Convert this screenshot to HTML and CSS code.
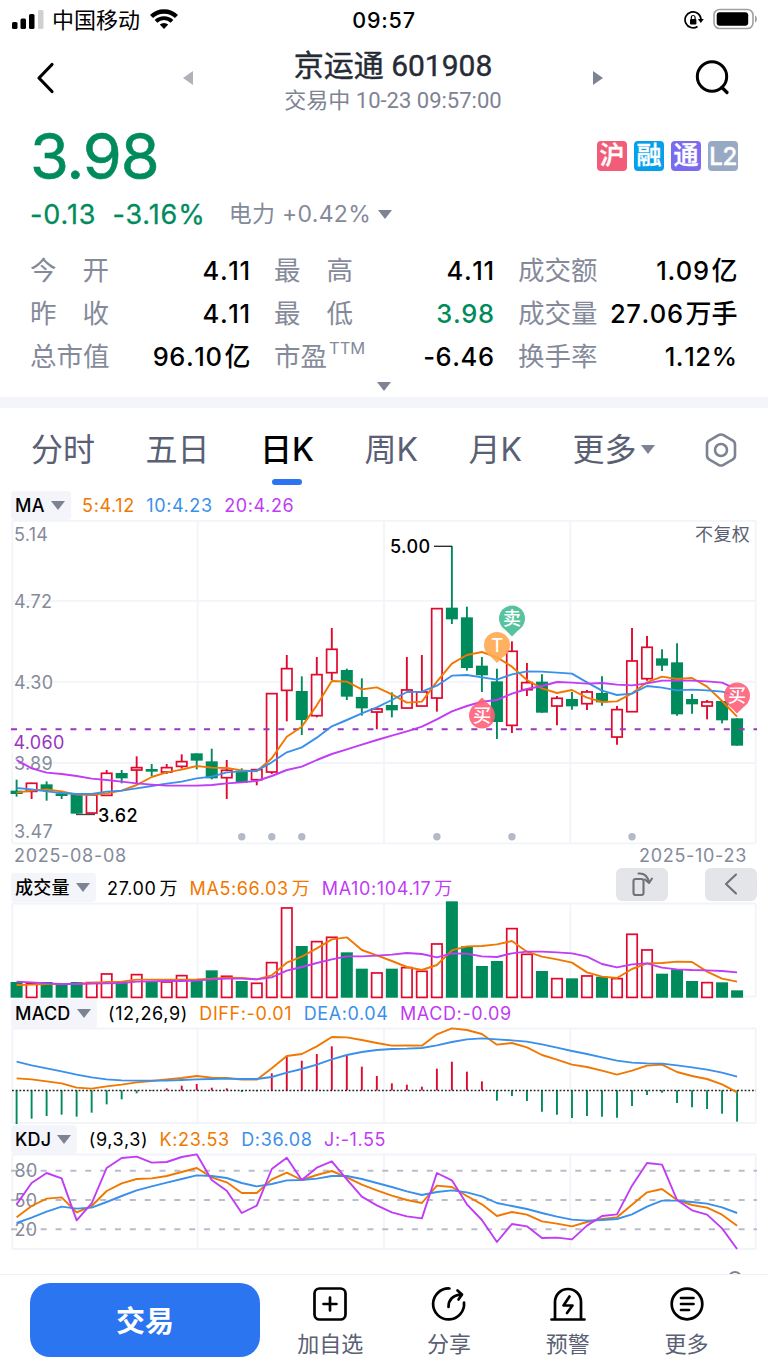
FILE: index.html
```html
<!DOCTYPE html>
<html lang="zh-CN">
<head>
  <meta charset="utf-8">
  <title>京运通 601908</title>
  <link rel="stylesheet" href="styles.css">
</head>
<body>
  <div class="status-bar">
    <svg class="signal" width="32" height="20" viewBox="0 0 32 20">
      <rect x="0" y="12" width="5.5" height="7" rx="1.5"/>
      <rect x="8.5" y="8.5" width="5.5" height="10.5" rx="1.5"/>
      <rect x="17" y="4" width="5.5" height="15" rx="1.5"/>
      <rect x="26" y="0" width="5.5" height="19" rx="1.5" fill="#d0d0d0"/>
    </svg>
    <span class="carrier">中国移动</span>
    <svg class="wifi" width="28" height="20" viewBox="0 0 28 20">
      <path d="M1.5 7.5a18 18 0 0 1 25 0" fill="none" stroke="#000" stroke-width="4.400"/>
      <path d="M6 12.3a11.5 11.5 0 0 1 16 0" fill="none" stroke="#000" stroke-width="3.8"/>
      <path d="M14 20l-4.2-4.4a6.2 6.2 0 0 1 8.4 0z"/>
    </svg>
    <span class="clock">09:57</span>
    <svg class="lock" width="20" height="18" viewBox="0 0 20 18">
      <path d="M13.5 15.5A8 8 0 1 1 17 8" fill="none" stroke="#000" stroke-width="1.7"/>
      <path d="M13.8 8h6l-3 4z"/>
      <rect x="6" y="8" width="6.4" height="5.4" rx="1"/>
      <path d="M7.3 8V6.4a1.9 1.9 0 0 1 3.8 0V8" fill="none" stroke="#000" stroke-width="1.2"/>
    </svg>
    <svg class="battery" width="46" height="22" viewBox="0 0 46 22">
      <rect x="1" y="1.500" width="39" height="19" rx="5.500" fill="none" stroke="#a0a0a0" stroke-width="1.600"/>
      <rect x="3.700" y="4.300" width="31.500" height="13.500" rx="3"/>
      <path d="M42 7.500c2.500 1 2.500 6 0 7z" fill="#a0a0a0"/>
    </svg>
  </div>

  <header class="header">
    <svg class="back" width="20" height="32" viewBox="0 0 20 32">
      <path d="M16 2.500L3 16L16 29.500" fill="none" stroke="#000" stroke-width="3.200" stroke-linecap="round" stroke-linejoin="round"/>
    </svg>
    <svg class="prev" width="10" height="14" viewBox="0 0 10 14"><path d="M10 0v14L0 7z" fill="#b0b2b8"/></svg>
    <div class="title">
      <h1>京运通 601908</h1>
      <p>交易中 10-23 09:57:00</p>
    </div>
    <svg class="next" width="10" height="14" viewBox="0 0 10 14"><path d="M0 0v14l10-7z" fill="#7e8394"/></svg>
    <svg class="search" width="36" height="36" viewBox="0 0 36 36">
      <circle cx="17" cy="16.500" r="14.700" fill="none" stroke="#000" stroke-width="3"/>
      <path d="M27 27.500l5 5" stroke="#000" stroke-width="3.200" stroke-linecap="round"/>
    </svg>
  </header>

  <section class="quote">
    <div class="price-row">
      <span class="price">3.98</span>
      <div class="tags">
        <span class="tag tag-hu">沪</span>
        <span class="tag tag-rong">融</span>
        <span class="tag tag-tong">通</span>
        <span class="tag tag-l2">L2</span>
      </div>
    </div>
    <div class="change-row">
      <span class="change">-0.13</span>
      <span class="change percent">-3.16%</span>
      <span class="sector">电力 <span class="sector-num">+0.42%</span></span>
      <i class="caret"></i>
    </div>
    <div class="stats">
      <div class="stat"><span class="wide"><b>今</b><b>开</b></span><em>4.11</em></div>
      <div class="stat"><span class="wide"><b>最</b><b>高</b></span><em>4.11</em></div>
      <div class="stat"><span>成交额</span><em>1.09<small>亿</small></em></div>
      <div class="stat"><span class="wide"><b>昨</b><b>收</b></span><em>4.11</em></div>
      <div class="stat"><span class="wide"><b>最</b><b>低</b></span><em class="down">3.98</em></div>
      <div class="stat"><span>成交量</span><em>27.06<small>万手</small></em></div>
      <div class="stat"><span>总市值</span><em>96.10<small>亿</small></em></div>
      <div class="stat"><span>市盈<sup>TTM</sup></span><em>-6.46</em></div>
      <div class="stat"><span>换手率</span><em>1.12%</em></div>
    </div>
    <div class="expand"><i class="caret"></i></div>
  </section>

  <nav class="tabs">
    <a>分时</a>
    <a>五日</a>
    <a class="active">日K</a>
    <a>周K</a>
    <a>月K</a>
    <a class="more">更多<i class="caret"></i></a>
    <svg width="32" height="34" viewBox="0 0 32 34">
      <path d="M13.500 2.200q2.500-1.400 5 0l9 5.200q2.500 1.400 2.500 4.300v10.600q0 2.900-2.500 4.300l-9 5.200q-2.500 1.400-5 0l-9-5.200Q2 25.200 2 22.300V11.700q0-2.900 2.500-4.300z" fill="none" stroke="#7e8394" stroke-width="2.600"/>
      <circle cx="16" cy="17" r="6" fill="none" stroke="#7e8394" stroke-width="2.600"/>
    </svg>
  </nav>

  <main class="charts">
    <div class="legend legend-ma">
      <span class="picker">MA<i class="caret"></i></span>
      <span class="c-orange">5:4.12</span>
      <span class="c-blue">10:4.23</span>
      <span class="c-purple">20:4.26</span>
    </div>
    <svg id="kline" class="plot" width="768" height="324"></svg>
    <div class="dates"><span>2025-08-08</span><span>2025-10-23</span></div>

    <div class="legend legend-vol">
      <span class="picker">成交量<i class="caret"></i></span>
      <span>27.00<small>万</small></span>
      <span class="c-orange">MA5:66.03<small>万</small></span>
      <span class="c-purple">MA10:104.17<small>万</small></span>
      <div class="tools">
        <button>
          <svg width="24" height="26" viewBox="0 0 24 26">
            <rect x="3.500" y="8" width="10" height="16" rx="2"/>
            <path d="M8.500 2.500c5.500-.5 9 2.500 10.500 8.500M15 8.500l4 3.500l3-4.500"/>
          </svg>
        </button>
        <button>
          <svg width="14" height="22" viewBox="0 0 14 22"><path d="M12 1.500L2 11l10 9.500"/></svg>
        </button>
      </div>
    </div>
    <svg id="volume" class="plot" width="768" height="95"></svg>

    <div class="legend legend-macd">
      <span class="picker">MACD<i class="caret"></i></span>
      <span>(12,26,9)</span>
      <span class="c-orange">DIFF:-0.01</span>
      <span class="c-blue">DEA:0.04</span>
      <span class="c-purple">MACD:-0.09</span>
    </div>
    <svg id="macd" class="plot" width="768" height="96"></svg>

    <div class="legend legend-kdj">
      <span class="picker">KDJ<i class="caret"></i></span>
      <span>(9,3,3)</span>
      <span class="c-orange">K:23.53</span>
      <span class="c-blue">D:36.08</span>
      <span class="c-purple">J:-1.55</span>
    </div>
    <svg id="kdj" class="plot" width="768" height="96"></svg>
    <div class="peek"><i></i></div>
  </main>

  <footer class="bottom-bar">
    <button class="trade">交易</button>
    <a>
      <svg width="36" height="36" viewBox="0 0 36 36"><rect x="2.500" y="2.500" width="31" height="31" rx="5"/><path d="M18 11.500v13M11.500 18h13"/></svg>
      加自选
    </a>
    <a>
      <svg width="36" height="36" viewBox="0 0 36 36"><path d="M18.500 2.500A15.500 15.500 0 1 0 33 16.500"/><path d="M17.500 21c0-7 4-11.500 12-12.500M26.500 4.500l4.500 4l-3.500 5"/></svg>
      分享
    </a>
    <a>
      <svg width="36" height="36" viewBox="0 0 36 36"><path d="M5 33V16a13 13 0 0 1 26 0v17M1.500 33.500h33"/><path d="M19.500 10.500l-6 9h9l-5.500 7.500"/></svg>
      预警
    </a>
    <a>
      <svg width="36" height="36" viewBox="0 0 36 36"><circle cx="18" cy="18" r="15.300"/><path d="M12 12h12.500M12 18h12.500M12 24h8"/></svg>
      更多
    </a>
  </footer>
  <script src="chart.js"></script>
</body>
</html>
```
FILE: styles.css
```css
* {
  box-sizing: border-box;
}

body {
  margin: 0;
  width: 768px;
  height: 1366px;
  overflow: hidden;
  background: #fff;
  color: #000;
  font-family: Inter, "Noto Sans CJK SC", sans-serif;
}

h1, p {
  margin: 0;
}

i, em, b {
  font-style: normal;
  font-weight: inherit;
}

button {
  border: 0;
  padding: 0;
  font-family: inherit;
}

.caret {
  display: inline-block;
  border: 7px solid transparent;
  border-top: 9px solid #7e8394;
  border-bottom: 0;
}

.c-orange { color: #f07800; }
.c-blue { color: #3a90ea; }
.c-purple { color: #c03cf5; }
.down { color: #008b5c; }

/* status bar */
.status-bar {
  display: flex;
  align-items: center;
  height: 40px;
  padding: 0 9px 0 12px;
  position: relative;
}

.carrier {
  margin: 0 10px 0 8px;
  font-size: 22px;
  line-height: 40px;
}

.signal {
  margin-bottom: 1px;
}

.wifi {
  margin-bottom: 3px;
}

.clock {
  position: absolute;
  left: 0;
  right: 0;
  text-align: center;
  font-size: 21.5px;
  font-weight: 500;
  letter-spacing: 0.8px;
}

.lock {
  margin-left: auto;
}

.battery {
  margin-left: 9px;
  margin-bottom: 2px;
}

/* header */
.header {
  display: flex;
  align-items: center;
  height: 76px;
  padding: 0 37px 0 36px;
}

.prev {
  margin-left: 127px;
}

.title {
  flex: 1;
  text-align: center;
  padding-top: 8px;
  font-family: Roboto, "Noto Sans CJK SC", sans-serif;
}

.title h1 {
  font-size: 30px;
  font-weight: 400;
  line-height: 38px;
  color: #262b35;
  -webkit-text-stroke: 0.4px #262b35;
}

.title p {
  font-size: 22px;
  line-height: 32px;
  color: #7e8394;
}

.search {
  margin-left: 92px;
}

/* quote */
.quote {
  height: 292px;
  border-bottom: 11px solid #f4f5fa;
  padding: 0 31px 0 30px;
}

.price-row {
  display: flex;
  justify-content: space-between;
  height: 76px;
  padding-top: 2px;
  margin-right: -1px;
}

.price {
  font-size: 63px;
  line-height: 76px;
  letter-spacing: -1.2px;
  color: #008b5c;
  -webkit-text-stroke: 0.6px #008b5c;
}

.tags {
  display: flex;
  gap: 7px;
  padding-top: 23px;
}

.tag {
  width: 30px;
  height: 30px;
  border-radius: 4px;
  color: #fff;
  font-size: 25px;
  font-weight: 500;
  line-height: 29px;
  text-align: center;
  -webkit-text-stroke: 0.4px #fff;
}

.tag-hu { background: #f25c78; }
.tag-rong { background: #06a0ea; }
.tag-tong { background: #7a6ced; }
.tag-l2 { background: #98a9c4; font-size: 24px; line-height: 31px; letter-spacing: -0.5px; }

.change-row {
  display: flex;
  align-items: center;
  height: 44px;
  font-size: 27px;
  letter-spacing: 0.9px;
}

.change {
  color: #008b5c;
  -webkit-text-stroke: 0.3px #008b5c;
}

.percent {
  margin-left: 16px;
}

.sector {
  margin-left: 23px;
  margin-top: -1px;
  font-size: 23px;
  letter-spacing: 0.3px;
  line-height: 40px;
  color: #858a9a;
}

.change-row .caret {
  margin-left: 7px;
}

.stats {
  display: grid;
  grid-template-columns: 220px 220px 219px;
  grid-auto-rows: 43px;
  column-gap: 24px;
  margin-top: 13px;
}

.stat {
  display: flex;
  justify-content: space-between;
  white-space: nowrap;
  line-height: 43px;
  font-size: 26.5px;
}

.stat > span {
  color: #858a9a;
}

.stat .wide {
  display: flex;
  justify-content: space-between;
  width: 79px;
}

.stat sup {
  margin-left: 2px;
  font-size: 16.5px;
  line-height: 0;
  vertical-align: 12px;
}

.stat em {
  font-size: 25.5px;
  font-weight: 500;
  font-kerning: none;
  letter-spacing: 0.6px;
  margin-right: -0.6px;
}

.stat em small {
  margin-left: 2px;
  font-size: 26px;
  letter-spacing: 0;
}

.expand {
  height: 20px;
  padding-top: 3px;
  line-height: 20px;
  text-align: center;
  font-size: 0;
}

/* period tabs */
.tabs {
  display: flex;
  justify-content: space-between;
  align-items: center;
  height: 82px;
  padding: 1px 31px 0 31px;
}

.tabs a {
  position: relative;
  font-size: 32px;
  line-height: 50px;
  color: #5a6074;
}

.tabs .active {
  color: #000;
  font-weight: 500;
}

.tabs .active::after {
  content: "";
  position: absolute;
  left: 12px;
  bottom: -10px;
  width: 30px;
  height: 6px;
  border-radius: 3px;
  background: #2b76f0;
}

.tabs .caret {
  margin-left: 4px;
  vertical-align: 7px;
}

/* charts */
.legend {
  display: flex;
  align-items: center;
  height: 30px;
  padding-left: 11px;
  font-size: 18px;
  letter-spacing: 0.6px;
  white-space: nowrap;
}

.legend > span {
  margin-right: 11.5px;
}

.legend small {
  font-size: 18px;
  margin-left: 3px;
}

.legend .picker {
  height: 29px;
  padding: 0 6px 0 4px;
  line-height: 30px;
  border-radius: 4px;
  background: #f4f5fa;
  font-weight: 500;
  letter-spacing: 0.2px;
}

.picker .caret {
  margin-left: 6px;
  vertical-align: 2px;
}

.plot {
  display: block;
  overflow: visible;
}

.dates {
  display: flex;
  justify-content: space-between;
  height: 24px;
  padding: 0 21px 0 14px;
  font-size: 18px;
  line-height: 24px;
  letter-spacing: 0.7px;
  color: #858a9a;
}

.legend-vol {
  height: 35px;
  padding-top: 3px;
}

.tools {
  display: flex;
  gap: 37px;
  margin: -6px 11px 0 auto;
}

.tools button {
  width: 52px;
  height: 33px;
  border-radius: 6px;
  background: #e4e5e9;
}

.tools svg {
  display: block;
  margin: 0 auto;
  fill: none;
  stroke: #70727a;
  stroke-width: 2.1;
  stroke-linecap: round;
  stroke-linejoin: round;
}

.label {
  font-size: 18px;
  letter-spacing: 0.3px;
  fill: #858a9a;
}

.label-dark {
  fill: #5a6074;
}

.label-cost {
  fill: #9a35bd;
}

.mark {
  font-size: 18px;
  font-weight: 500;
  letter-spacing: 0.4px;
  fill: #000;
}

.pin {
  font-size: 18px;
  font-weight: 500;
  fill: #fff;
}

.peek {
  height: 24px;
  overflow: hidden;
  padding: 21px 0 0 728px;
}

.peek i {
  display: block;
  width: 14px;
  height: 14px;
  border: 2px solid #7e8394;
  border-radius: 50%;
}

/* bottom bar */
.bottom-bar {
  display: flex;
  height: 92px;
  padding: 8px 22px 0 30px;
  border-top: 1px solid #f0f1f5;
  background: #fff;
}

.trade {
  width: 230px;
  height: 74px;
  margin-right: 11px;
  padding-bottom: 2px;
  border-radius: 20px;
  background: #2b76f0;
  color: #fff;
  font-size: 29px;
  font-weight: 600;
}

.bottom-bar a {
  flex: 1;
  text-align: center;
  font-size: 22px;
  line-height: 34px;
  color: #5a6074;
}

.bottom-bar svg {
  display: block;
  margin: 3px auto 5px;
  fill: none;
  stroke: #000;
  stroke-width: 2.7;
  stroke-linecap: round;
  stroke-linejoin: round;
}
```
FILE: chart.js
```js
const RED = '#e3082d';
const GREEN = '#008b5c';
const ORANGE = '#f07800';
const BLUE = '#3a90ea';
const PURPLE = '#c03cf5';

// all series are stored in thirds of a pixel
// candle: [direction, high, body top, body bottom, low]
const candles = [
  ['d', 779, 812, 822, 830], ['u', 788, 789, 815, 837], ['d', 784, 793, 812, 842], ['d', 815, 820, 828, 837],
  ['d', 820, 820, 881, 881], ['u', 824, 824, 880, 880], ['u', 750, 759, 827, 827], ['d', 750, 759, 775, 790],
  ['u', 709, 742, 751, 792], ['d', 732, 747, 755, 768], ['u', 732, 742, 757, 762], ['u', 703, 724, 740, 746],
  ['d', 700, 700, 722, 748], ['d', 686, 724, 775, 778], ['u', 720, 750, 774, 837], ['d', 745, 752, 788, 788],
  ['u', 748, 748, 780, 796], ['u', 520, 520, 757, 762], ['u', 405, 445, 512, 604], ['d', 469, 513, 600, 645],
  ['u', 411, 463, 588, 592], ['u', 324, 387, 459, 480], ['d', 446, 450, 530, 540], ['d', 475, 531, 565, 587],
  ['u', 562, 566, 577, 628], ['d', 517, 555, 571, 592], ['u', 411, 509, 565, 565], ['u', 405, 515, 559, 559],
  ['u', 265, 265, 535, 575], ['d', 78, 263, 298, 312], ['d', 260, 292, 444, 452], ['d', 411, 437, 466, 516],
  ['d', 446, 484, 606, 657], ['u', 364, 393, 617, 639], ['u', 429, 487, 510, 528], ['d', 463, 485, 578, 578],
  ['u', 528, 534, 559, 616], ['d', 516, 537, 559, 569], ['u', 510, 515, 552, 570], ['d', 469, 519, 547, 557],
  ['u', 558, 568, 652, 674], ['u', 324, 422, 576, 576], ['u', 348, 381, 477, 482], ['d', 388, 415, 437, 453],
  ['d', 370, 427, 583, 587], ['d', 522, 537, 553, 581], ['u', 540, 545, 559, 598], ['d', 543, 543, 601, 610],
  ['d', 595, 595, 677, 677]
];

const ma5 = [818, 812, 808, 814, 824, 825, 820, 812, 795, 771, 757, 749, 738, 743, 744, 751, 754, 715, 650, 620, 556, 483, 485, 508, 502, 523, 548, 545, 485, 431, 405, 396, 412, 440, 480, 505, 519, 510, 533, 546, 544, 520, 487, 470, 477, 474, 500, 543, 590];
const ma10 = [804, 808, 814, 819, 822, 822, 815, 812, 805, 798, 791, 785, 775, 770, 757, 754, 752, 727, 697, 682, 653, 619, 600, 580, 562, 540, 516, 515, 497, 467, 465, 472, 479, 463, 454, 455, 458, 461, 487, 512, 525, 521, 498, 503, 511, 509, 511, 515, 527];
const ma20 = [720, 745, 758, 762, 768, 776, 780, 785, 790, 794, 797, 797, 797, 795, 790, 787, 783, 768, 750, 740, 720, 702, 688, 674, 660, 647, 634, 620, 598, 574, 558, 545, 540, 521, 507, 498, 486, 488, 491, 489, 494, 496, 490, 482, 482, 482, 484, 488, 508];

const vol = [351, 355, 351, 356, 351, 352, 326, 351, 328, 351, 350, 331, 347, 316, 333, 348, 354, 292, 128, 243, 229, 216, 262, 311, 323, 311, 307, 318, 236, 109, 244, 303, 288, 190, 267, 318, 340, 340, 332, 335, 340, 207, 254, 326, 313, 348, 352, 352, 376];
const vol5 = [360, 359, 357, 357, 356, 354, 351, 350, 344, 344, 344, 344, 343, 341, 338, 339, 343, 331, 293, 275, 250, 223, 217, 255, 271, 288, 306, 315, 300, 256, 244, 243, 238, 228, 260, 275, 283, 293, 322, 335, 339, 312, 295, 294, 290, 291, 320, 341, 350];
const vol10 = [350, 352, 355, 357, 357, 356, 355, 354, 350, 349, 348, 348, 347, 343, 341, 341, 343, 337, 317, 306, 294, 283, 274, 274, 272, 269, 264, 267, 277, 265, 266, 274, 276, 265, 260, 260, 262, 265, 275, 297, 307, 298, 295, 308, 313, 315, 316, 318, 322];

const hist = [312, 296, 288, 284, 290, 278, 253, 238, 220, 213, 205, 197, 192, 203, 205, 216, 214, 160, 107, 122, 102, 79, 105, 140, 168, 190, 194, 200, 146, 125, 155, 184, 242, 228, 243, 275, 284, 294, 288, 290, 293, 258, 225, 218, 249, 262, 267, 281, 305];
const diff = [175, 178, 184, 190, 203, 206, 199, 194, 187, 183, 178, 174, 168, 173, 174, 179, 179, 145, 108, 102, 79, 51, 52, 60, 69, 77, 76, 77, 43, 25, 30, 42, 74, 69, 82, 105, 119, 134, 141, 152, 164, 152, 137, 134, 156, 168, 177, 193, 217];
const dea = [125, 136, 145, 154, 164, 172, 178, 181, 182, 182, 182, 180, 178, 177, 176, 177, 177, 171, 158, 147, 134, 118, 105, 96, 90, 87, 86, 84, 76, 66, 58, 55, 58, 61, 65, 73, 83, 93, 102, 112, 122, 128, 130, 131, 136, 142, 149, 158, 170];

const kLine = [592, 558, 536, 532, 577, 558, 513, 490, 477, 475, 468, 456, 444, 472, 487, 519, 519, 478, 458, 480, 465, 453, 472, 494, 511, 527, 540, 549, 497, 501, 528, 553, 588, 576, 584, 604, 611, 619, 606, 597, 592, 554, 517, 507, 540, 555, 563, 584, 617];
const dLine = [609, 593, 575, 560, 566, 563, 546, 528, 511, 499, 488, 477, 466, 468, 474, 489, 499, 492, 481, 480, 476, 468, 468, 477, 489, 501, 514, 525, 516, 511, 517, 529, 549, 558, 567, 579, 590, 599, 602, 600, 597, 583, 560, 542, 542, 546, 551, 562, 579];
const jLine = [553, 489, 459, 475, 601, 550, 444, 414, 410, 428, 426, 411, 403, 480, 512, 579, 557, 447, 413, 480, 443, 424, 478, 530, 556, 577, 589, 595, 459, 481, 553, 600, 666, 612, 619, 654, 653, 658, 617, 588, 583, 497, 429, 434, 540, 571, 584, 625, 687];

const x = i => 16.6 + i * 15.01;

function line(x1, y1, x2, y2, color, width = 2, extra = '') {
  return `<line x1="${x1}" y1="${y1}" x2="${x2}" y2="${y2}" stroke="${color}" stroke-width="${width}" ${extra}/>`;
}

function series(values, color, offset) {
  const points = values.map((v, i) => `${x(i)},${(v - offset) / 3}`).join(' ');
  return `<polyline points="${points}" fill="none" stroke="${color}" stroke-width="1.9" stroke-linejoin="round"/>`;
}

function box(i, top, bottom, up) {
  if (up) {
    return `<rect x="${x(i) - 5.2}" y="${top + 0.3}" width="10.4" height="${Math.max(bottom - top - 0.6, 1)}" fill="#fff" stroke="${RED}" stroke-width="1.7"/>`;
  }
  return `<rect x="${x(i) - 6}" y="${top}" width="12" height="${bottom - top}" fill="${GREEN}"/>`;
}

function grid(rows) {
  const last = rows[rows.length - 1];
  return rows.map(y => line(12, y, 756, y, '#f2f4fa', 1.8)).join('') +
    [12.3, 197.6, 384, 570.3, 755.7].map(gx => line(gx, rows[0], gx, last, '#f2f4fa', 1.8)).join('');
}

function text(tx, ty, value, cls = 'label', extra = '') {
  return `<text x="${tx}" y="${ty}" class="${cls}" ${extra}>${value}</text>`;
}

function pin(px, py, color, value, down) {
  const tip = down ? 1 : -1;
  return `<g transform="translate(${px} ${py})" opacity="0.9">
    <circle r="13" fill="${color}"/>
    <path d="M-11 ${tip * 7}L0 ${tip * 18}L11 ${tip * 7}z" fill="${color}"/>
    <text class="pin" y="6.500" text-anchor="middle">${value}</text></g>`;
}

function drawKline() {
  let out = grid([0.8, 80.8, 161.8, 243, 323.3]);
  out += text(14, 21, '5.14') + text(14, 87.5, '4.72') + text(14, 168.5, '4.30') + text(14, 250, '3.89') + text(14, 318, '3.47');
  out += text(750, 21, '不复权', 'label label-dark', 'text-anchor="end"');
  candles.forEach(([dir, high, top, bottom, low], i) => {
    const up = dir === 'u';
    out += line(x(i), high / 3, x(i), low / 3, up ? RED : GREEN, 1.9);
    out += box(i, top / 3, bottom / 3, up);
  });
  out += line(11, 209.2, 757, 209.2, '#9a35bd', 2, 'stroke-dasharray="6 8.85"');
  out += text(13.5, 228.5, '4.060', 'label label-cost');
  out += series(ma5, ORANGE, 0) + series(ma10, BLUE, 0) + series(ma20, PURPLE, 0);
  out += line(76, 294.5, 95, 294.5, '#444', 1.3) + text(98, 301.5, '3.62', 'mark');
  out += line(434, 26.3, 452, 26.3, '#222', 1.3) + text(390, 33, '5.00', 'mark');
  [15, 17, 19, 28, 33, 41].forEach(i => {
    out += `<circle cx="${x(i)}" cy="316.700" r="3.700" fill="#b4b9c8"/>`;
  });
  out += pin(497, 125, '#ffa850', 'T', true);
  out += pin(512, 98.5, '#44bd94', '卖', true);
  out += pin(482, 195.5, '#ff6078', '买', false);
  out += pin(737, 175.5, '#ff6078', '买', true);
  document.getElementById('kline').innerHTML = out;
}

function drawVolume() {
  let out = grid([0.5, 93.5]);
  vol.forEach((v, i) => {
    out += box(i, (v - 114) / 3, 94.7, candles[i][0] === 'u');
  });
  out += series(vol5, ORANGE, 114) + series(vol10, PURPLE, 114);
  document.getElementById('volume').innerHTML = out;
}

function drawMacd() {
  let out = grid([0.5, 95]);
  hist.forEach((v, i) => {
    out += line(x(i), 62.3, x(i), (v - 24) / 3, v < 211 ? RED : GREEN, 1.9);
  });
  out += line(12, 62.5, 756, 62.5, '#222', 1.7, 'stroke-dasharray="1.8 1.9"');
  out += series(diff, ORANGE, 24) + series(dea, BLUE, 24);
  document.getElementById('macd').innerHTML = out;
}

function drawKdj() {
  let out = grid([0.5, 95]);
  [[16.7, 80], [46, 50], [75.3, 20]].forEach(([y, value]) => {
    out += line(11, y, 757, y, '#b9bdca', 2, 'stroke-dasharray="6 8.85"');
    out += text(14.5, y + 6.7, value);
  });
  out += series(kLine, ORANGE, 402) + series(dLine, BLUE, 402) + series(jLine, PURPLE, 402);
  document.getElementById('kdj').innerHTML = out;
}

drawKline();
drawVolume();
drawMacd();
drawKdj();
```
